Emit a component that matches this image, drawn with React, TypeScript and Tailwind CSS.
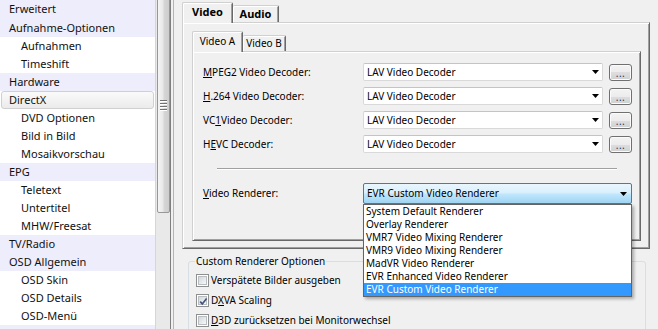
import React from "react";

type Row = { t: string; cat?: boolean; sel?: boolean };
const rows: Row[] = [
  { t: "Erweitert", cat: true },
  { t: "Aufnahme-Optionen", cat: true },
  { t: "Aufnahmen" },
  { t: "Timeshift" },
  { t: "Hardware", cat: true },
  { t: "DirectX", cat: true, sel: true },
  { t: "DVD Optionen" },
  { t: "Bild in Bild" },
  { t: "Mosaikvorschau" },
  { t: "EPG", cat: true },
  { t: "Teletext" },
  { t: "Untertitel" },
  { t: "MHW/Freesat" },
  { t: "TV/Radio", cat: true },
  { t: "OSD Allgemein", cat: true },
  { t: "OSD Skin" },
  { t: "OSD Details" },
  { t: "OSD-Menü" },
  { t: "", cat: true },
];

function Tree() {
  return (
    <div className="w-[155px] h-full bg-white flex flex-col overflow-hidden shrink-0">
      {rows.map((r, i) => {
        const h = i === 0 ? "h-[19px]" : "h-[18px]";
        if (r.sel)
          return (
            <div key={i} className={`${h} shrink-0 px-[1px]`}>
              <div className="h-full rounded-[3px] border border-[#d0d0d0] bg-[linear-gradient(#fafafa,#ebebeb)] pl-[7px] text-[11px] leading-[16px] text-[#111]">
                {r.t}
              </div>
            </div>
          );
        return (
          <div
            key={i}
            className={`${h} shrink-0 flex items-center text-[11px] text-[#111] ${
              r.cat ? "bg-[#ededfb] pl-[9px]" : "bg-white pl-[21px]"
            }`}
          >
            {r.t}
          </div>
        );
      })}
    </div>
  );
}

function Scrollbar() {
  return (
    <div className="w-[15px] h-full bg-[#e9e9e9] border-l border-[#d6d6d6] relative shrink-0">
      <div className="absolute left-[1px] right-0 top-[-6px] h-[219px] rounded-[2px] border border-[#979797] bg-[linear-gradient(90deg,#f5f5f5,#e8e8e8_45%,#d6d6d6_55%,#cdcdcd)] flex items-center justify-center">
        <div className="flex flex-col gap-[1px] mt-[2px]">
          <div className="w-[7px] h-px bg-[#707070] shadow-[0_1px_0_#fff]" />
          <div className="w-[7px] h-px bg-[#707070] shadow-[0_1px_0_#fff] mt-[1px]" />
          <div className="w-[7px] h-px bg-[#707070] shadow-[0_1px_0_#fff] mt-[1px]" />
          <div className="w-[7px] h-px bg-[#707070] shadow-[0_1px_0_#fff] mt-[1px]" />
        </div>
      </div>
    </div>
  );
}

function Arrow() {
  return (
    <svg width="7" height="4" viewBox="0 0 7 4">
      <path d="M0 0H7L3.5 4Z" fill="#000" />
    </svg>
  );
}

function U({ children }: { children: React.ReactNode }) {
  return <span className="underline decoration-1 underline-offset-[1px]">{children}</span>;
}

function Combo({ text }: { text: string }) {
  return (
    <div className="w-[240px] h-[18px] shrink-0 bg-white border border-[#d9d9d9] border-t-[#c4c4c4] rounded-[2px] flex items-center justify-between pl-[3px] pr-[3px] text-[10px]">
      <span>{text}</span>
      <Arrow />
    </div>
  );
}

function DotsButton() {
  return (
    <div className="ml-[6px] mt-[1px] w-[23px] h-[17px] shrink-0 rounded-[3px] border border-[#707070] bg-[linear-gradient(#f3f3f3,#ececec_50%,#dedede_50%,#d0d0d0)] shadow-[inset_0_0_0_1px_#fbfbfb] flex items-end justify-center text-[10px] leading-[10px] pb-[2px] text-[#1c3d72] tracking-[0.5px]">
      ...
    </div>
  );
}

function DecoderRow({ label, text }: { label: React.ReactNode; text: string }) {
  return (
    <div className="flex items-start h-[18px]">
      <div className="w-[160px] h-[18px] flex items-center text-[10px]">{label}</div>
      <Combo text={text} />
      <DotsButton />
    </div>
  );
}

const renderers = [
  "System Default Renderer",
  "Overlay Renderer",
  "VMR7 Video Mixing Renderer",
  "VMR9 Video Mixing Renderer",
  "MadVR Video Renderer",
  "EVR Enhanced Video Renderer",
  "EVR Custom Video Renderer",
];

function Checkbox({ checked }: { checked?: boolean }) {
  return (
    <div className="w-[13px] h-[13px] shrink-0 border border-[#8e8f8f] bg-white p-[1px]">
      <div className="w-full h-full border border-[#b9bdc2] bg-[linear-gradient(135deg,#d4d8dc,#f7f7f7)] relative">
        {checked && (
          <svg className="absolute left-[-1px] top-[-1px]" width="11" height="11" viewBox="0 0 11 11">
            <path d="M2.2 5.6L4.3 7.9L8.6 2.4" fill="none" stroke="#42557f" strokeWidth="1.7" />
          </svg>
        )}
      </div>
    </div>
  );
}

export default function App() {
  return (
    <div className="w-[658px] h-[329px] overflow-hidden flex bg-[#f0f0f0] text-black font-['Noto_Sans',sans-serif]">
      <Tree />
      <Scrollbar />
      <div className="w-px h-full bg-[#7f7f7f] shrink-0" />
      <div className="w-[2px] h-full shrink-0" />
      <div className="w-px h-full bg-[#b4b4b4] shrink-0" />
      <div className="flex-1 pl-[8px] pt-[2px] flex flex-col">
        {/* Outer tab control */}
        <div className="w-[468px]">
          <div className="flex items-end h-[20px]">
            <div className="relative z-10 -mb-px w-[51px] h-[21px] bg-[#f0f0f0] border-t border-l border-r border-t-[#d0d0d0] border-l-[#d0d0d0] border-r-[#696969] rounded-t-[2px] shadow-[inset_1px_1px_0_#fff,inset_-1px_0_0_#a0a0a0] flex items-center justify-center text-[11px] font-bold pb-[1px]">
              Video
            </div>
            <div className="w-[46px] h-[17px] bg-[#f0f0f0] border-t border-r border-t-[#d0d0d0] border-r-[#696969] rounded-t-[2px] shadow-[inset_1px_1px_0_#fff,inset_-1px_0_0_#a0a0a0] flex items-center justify-center text-[11px] font-bold">
              Audio
            </div>
          </div>
          <div className="h-[227px] border border-t-[#d0d0d0] border-l-[#d0d0d0] border-r-[#696969] border-b-[#696969] shadow-[inset_1px_1px_0_#fff,inset_-1px_-1px_0_#a0a0a0] pl-[9px] pt-[8px]">
            {/* Inner tab control */}
            <div className="w-[449px]">
              <div className="flex items-end h-[20px]">
                <div className="relative z-10 -mb-px w-[51px] h-[21px] bg-[#f0f0f0] border-t border-l border-r border-t-[#d0d0d0] border-l-[#d0d0d0] border-r-[#696969] rounded-t-[2px] shadow-[inset_1px_1px_0_#fff,inset_-1px_0_0_#a0a0a0] flex items-center justify-center text-[10px] pb-[1px]">
                  Video A
                </div>
                <div className="w-[43px] h-[16px] bg-[#f0f0f0] border-t border-r border-t-[#d0d0d0] border-r-[#696969] rounded-t-[2px] shadow-[inset_1px_1px_0_#fff,inset_-1px_0_0_#a0a0a0] flex items-center justify-center text-[10px]">
                  Video B
                </div>
              </div>
              <div className="h-[190px] border border-t-[#d0d0d0] border-l-[#d0d0d0] border-r-[#696969] border-b-[#696969] shadow-[inset_1px_1px_0_#fff,inset_-1px_-1px_0_#a0a0a0] pl-[10px] pt-[11px]">
                <div className="flex flex-col gap-[6px]">
                  <DecoderRow label={<><U>M</U>PEG2 Video Decoder:</>} text="LAV Video Decoder" />
                  <DecoderRow label={<><U>H</U>.264 Video Decoder:</>} text="LAV Video Decoder" />
                  <DecoderRow label={<>VC<U>1</U> Video Decoder:</>} text="LAV Video Decoder" />
                  <DecoderRow label={<>H<U>E</U>VC Decoder:</>} text="LAV Video Decoder" />
                </div>
                <div className="ml-[14px] mt-[15px] w-[400px] h-[2px] border-t border-t-[#a0a0a0] border-b border-b-white" />
                <div className="mt-[13px] flex items-start h-[21px]">
                  <div className="w-[160px] h-[18px] flex items-center text-[10px] mt-[1px]">
                    <span><U>V</U>ideo Renderer:</span>
                  </div>
                  <div className="relative w-[269px] h-[21px]">
                    <div className="w-full h-full rounded-[2px] border border-[#3c7fb1] bg-[linear-gradient(#eaf6fd,#d9f0fc_45%,#bee6fd_55%,#a0d4f2)] flex items-center justify-between pl-[3px] pr-[4px] text-[10px]">
                      <span>EVR Custom Video Renderer</span>
                      <Arrow />
                    </div>
                    <div className="absolute left-0 top-full w-[269px] z-50 bg-white border border-[#646464] shadow-[2px_2px_3px_rgba(0,0,0,0.3)]">
                      {renderers.map((r, i) => (
                        <div
                          key={r}
                          className={`h-[13px] leading-[13px] pl-[2px] text-[10px] ${
                            i === renderers.length - 1 ? "bg-[#3399ff] text-white" : "text-black"
                          }`}
                        >
                          {r}
                        </div>
                      ))}
                    </div>
                  </div>
                </div>
              </div>
            </div>
          </div>
        </div>
        {/* Group box */}
        <div className="relative ml-[6px] mt-[12px] w-[458px] h-[90px] shrink-0 border border-[#d5dfe5] rounded-[3px] pt-[12px] pl-[7px]">
          <div className="absolute left-[6px] top-[-8px] bg-[#f0f0f0] px-[1px] text-[10px] leading-[14px]">
            Custom Renderer Optionen
          </div>
          <div className="flex flex-col gap-[7px]">
            <div className="flex items-center gap-[2px] h-[13px]">
              <Checkbox />
              <span className="text-[10px]">Verspätete Bilder ausgeben</span>
            </div>
            <div className="flex items-center gap-[2px] h-[13px]">
              <Checkbox checked />
              <span className="text-[10px]">D<U>X</U>VA Scaling</span>
            </div>
            <div className="flex items-center gap-[2px] h-[13px]">
              <Checkbox />
              <span className="text-[10px]"><U>D</U>3D zurücksetzen bei Monitorwechsel</span>
            </div>
          </div>
        </div>
      </div>
    </div>
  );
}
